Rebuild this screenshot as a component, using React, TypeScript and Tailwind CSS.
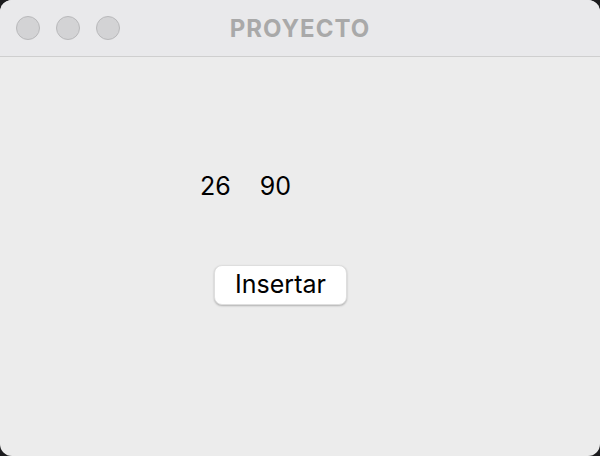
export default function App() {
  return (
    <div className="w-[600px] h-[456px] bg-[#1c1c1e] font-['Inter',sans-serif]">
      <div className="w-full h-full rounded-[12px] overflow-hidden bg-[#ececec] flex flex-col">
        {/* barra de titulo */}
        <div className="h-[57px] bg-[#e9e9eb] border-b border-[#cfcfcf] grid grid-cols-[1fr_auto_1fr] items-center px-4">
          <div className="flex gap-4">
            <span className="w-6 h-6 rounded-full bg-[#d3d3d5] border border-[#b9b9bb]" />
            <span className="w-6 h-6 rounded-full bg-[#d3d3d5] border border-[#b9b9bb]" />
            <span className="w-6 h-6 rounded-full bg-[#d3d3d5] border border-[#b9b9bb]" />
          </div>
          <h1 className="text-[24px] leading-[28px] font-bold text-[#a9a9a9] tracking-[1px] mt-[2px]">PROYECTO</h1>
          <div />
        </div>

        <div className="flex-1 flex flex-col pt-[114px]">
          <div className="flex gap-[29px] pl-[200px] text-[25px] text-black leading-[30px]">
            <span>26</span>
            <span>90</span>
          </div>
          <div className="pl-[214px] mt-[64px]">
            <button className="w-[133px] h-[40px] bg-white rounded-[8px] shadow-[0_1px_2px_rgba(0,0,0,0.25)] border border-[#dedede] text-[25px] text-black">
              Insertar
            </button>
          </div>
        </div>
      </div>
    </div>
  );
}
